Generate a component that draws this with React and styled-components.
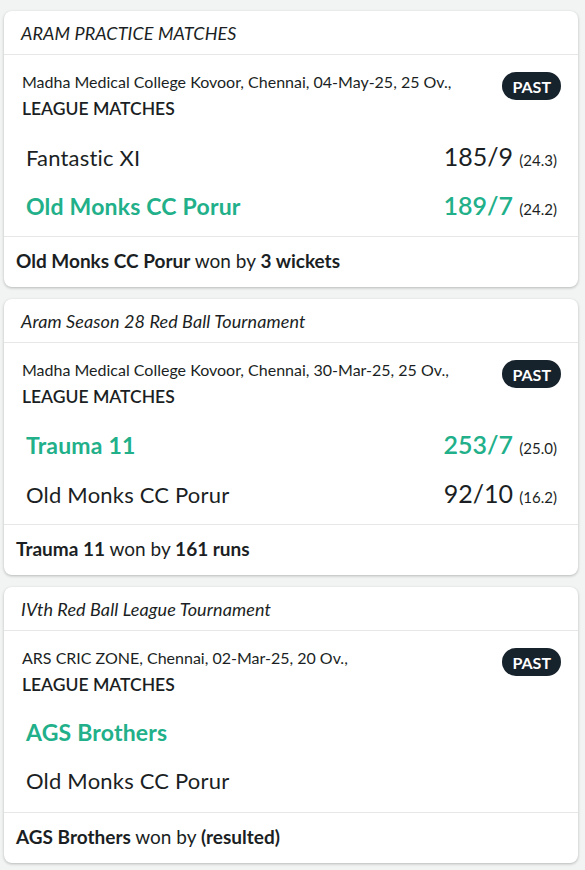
import React from 'react';
import styled, { createGlobalStyle } from 'styled-components';

const matches = [
  {
    title: 'ARAM PRACTICE MATCHES',
    venue: 'Madha Medical College Kovoor, Chennai, 04-May-25, 25 Ov.,',
    teams: [
      { name: 'Fantastic XI', score: '185/9', overs: '(24.3)' },
      { name: 'Old Monks CC Porur', score: '189/7', overs: '(24.2)', winner: true },
    ],
    winner: 'Old Monks CC Porur',
    margin: '3 wickets',
  },
  {
    title: 'Aram Season 28 Red Ball Tournament',
    venue: 'Madha Medical College Kovoor, Chennai, 30-Mar-25, 25 Ov.,',
    teams: [
      { name: 'Trauma 11', score: '253/7', overs: '(25.0)', winner: true },
      { name: 'Old Monks CC Porur', score: '92/10', overs: '(16.2)' },
    ],
    winner: 'Trauma 11',
    margin: '161 runs',
  },
  {
    title: 'IVth Red Ball League Tournament',
    venue: 'ARS CRIC ZONE, Chennai, 02-Mar-25, 20 Ov.,',
    teams: [
      { name: 'AGS Brothers', winner: true },
      { name: 'Old Monks CC Porur' },
    ],
    winner: 'AGS Brothers',
    margin: '(resulted)',
  },
];

function App() {
  return (
    <>
      <GlobalStyle />
      <List>
        {matches.map((m) => (
          <Card key={m.title}>
            <Header>{m.title}</Header>
            <Body>
              <MetaRow>
                <Meta>
                  <Venue>{m.venue}</Venue>
                  <Stage>LEAGUE MATCHES</Stage>
                </Meta>
                <Badge>PAST</Badge>
              </MetaRow>
              <Teams>
                {m.teams.map((t) => (
                  <TeamRow key={t.name}>
                    <TeamName $win={t.winner}>{t.name}</TeamName>
                    {t.score && (
                      <Score $win={t.winner}>
                        {t.score} <Overs>{t.overs}</Overs>
                      </Score>
                    )}
                  </TeamRow>
                ))}
              </Teams>
            </Body>
            <Result>
              <b>{m.winner}</b> won by <b>{m.margin}</b>
            </Result>
          </Card>
        ))}
      </List>
    </>
  );
}

export default App;

const GlobalStyle = createGlobalStyle`
    body {
        margin: 0;
        background: #f2f3f3;
        font-family: Lato, "Open Sans", sans-serif;
        color: #1b1f24;
    }
`
const List = styled.div`
    display: flex;
    flex-direction: column;
    gap: 12px;
    padding: 11px 7px 6px 4px;
`
const Card = styled.div`
    background: #fff;
    border-radius: 8px;
    box-shadow: 0 1px 3px rgba(0, 0, 0, 0.25);
    overflow: hidden;
`
const Header = styled.div`
    height: 43px;
    display: flex;
    align-items: center;
    padding: 0 17px;
    font-size: 18px;
    letter-spacing: 0.1px;
    font-style: italic;
    border-bottom: 1px solid #e6e8e8;
`
const Body = styled.div`
    padding: 16px 17px 0 18px;
`
const MetaRow = styled.div`
    display: flex;
    justify-content: space-between;
    align-items: flex-start;
`
const Meta = styled.div`
    display: flex;
    flex-direction: column;
    gap: 5px;
`
const Venue = styled.div`
    font-size: 16px;
    line-height: 22px;
`
const Stage = styled.div`
    font-size: 17.5px;
    font-weight: 600;
    line-height: 22px;
`
const Badge = styled.div`
    margin-top: 1px;
    background: #16222c;
    color: #fff;
    font-weight: 700;
    font-size: 16px;
    height: 28px;
    padding: 0 10px;
    border-radius: 14px;
    display: flex;
    align-items: center;
`
const Teams = styled.div`
    padding: 22px 4px 17px 4px;
    display: flex;
    flex-direction: column;
    gap: 21px;
`
const TeamRow = styled.div`
    height: 28px;
    display: flex;
    justify-content: space-between;
    align-items: baseline;
    line-height: 28px;
`
const TeamName = styled.div`
    font-size: ${(p) => (p.$win ? '23px' : '22px')};
    letter-spacing: 0.2px;
    font-weight: ${(p) => (p.$win ? 700 : 400)};
    color: ${(p) => (p.$win ? '#21b089' : '#1b1f24')};
`
const Score = styled.div`
    font-size: 25px;
    font-weight: ${(p) => (p.$win ? 600 : 400)};
    color: ${(p) => (p.$win ? '#21b089' : '#1b1f24')};
`
const Overs = styled.span`
    font-size: 15px;
    font-weight: 400;
    color: #1b1f24;
`
const Result = styled.div`
    border-top: 1px solid #e6e8e8;
    height: 51px;
    box-sizing: border-box;
    display: flex;
    align-items: center;
    padding: 0 12px 3px;
    font-size: 19px;
    white-space: pre;

    b {
        font-weight: 700;
    }
`
